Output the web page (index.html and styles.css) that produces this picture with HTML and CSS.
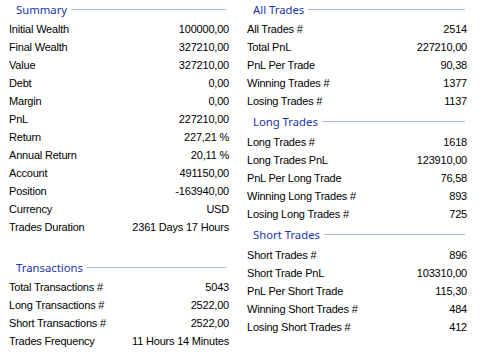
FILE: index.html
```html
<!DOCTYPE html>
<html>
<head>
<meta charset="utf-8">
<link rel="stylesheet" href="styles.css">
</head>
<body>
<div class="page">
  <div class="col col-left">
    <section class="group">
      <div class="group-head"><span class="group-title">Summary</span><span class="group-line"></span></div>
      <div class="row"><span>Initial Wealth</span><span>100000,00</span></div>
      <div class="row"><span>Final Wealth</span><span>327210,00</span></div>
      <div class="row"><span>Value</span><span>327210,00</span></div>
      <div class="row"><span>Debt</span><span>0,00</span></div>
      <div class="row"><span>Margin</span><span>0,00</span></div>
      <div class="row"><span>PnL</span><span>227210,00</span></div>
      <div class="row"><span>Return</span><span>227,21 %</span></div>
      <div class="row"><span>Annual Return</span><span>20,11 %</span></div>
      <div class="row"><span>Account</span><span>491150,00</span></div>
      <div class="row"><span>Position</span><span>-163940,00</span></div>
      <div class="row"><span>Currency</span><span>USD</span></div>
      <div class="row"><span>Trades Duration</span><span>2361 Days 17 Hours</span></div>
    </section>
    <section class="group group-gap">
      <div class="group-head"><span class="group-title">Transactions</span><span class="group-line"></span></div>
      <div class="row"><span>Total Transactions #</span><span>5043</span></div>
      <div class="row"><span>Long Transactions #</span><span>2522,00</span></div>
      <div class="row"><span>Short Transactions #</span><span>2522,00</span></div>
      <div class="row"><span>Trades Frequency</span><span>11 Hours 14 Minutes</span></div>
    </section>
  </div>
  <div class="col col-right">
    <section class="group">
      <div class="group-head"><span class="group-title">All Trades</span><span class="group-line"></span></div>
      <div class="row"><span>All Trades #</span><span>2514</span></div>
      <div class="row"><span>Total PnL</span><span>227210,00</span></div>
      <div class="row"><span>PnL Per Trade</span><span>90,38</span></div>
      <div class="row"><span>Winning Trades #</span><span>1377</span></div>
      <div class="row"><span>Losing Trades #</span><span>1137</span></div>
    </section>
    <section class="group group-small-gap">
      <div class="group-head"><span class="group-title">Long Trades</span><span class="group-line"></span></div>
      <div class="row"><span>Long Trades #</span><span>1618</span></div>
      <div class="row"><span>Long Trades PnL</span><span>123910,00</span></div>
      <div class="row"><span>PnL Per Long Trade</span><span>76,58</span></div>
      <div class="row"><span>Winning Long Trades #</span><span>893</span></div>
      <div class="row"><span>Losing Long Trades #</span><span>725</span></div>
    </section>
    <section class="group group-small-gap">
      <div class="group-head"><span class="group-title">Short Trades</span><span class="group-line"></span></div>
      <div class="row"><span>Short Trades #</span><span>896</span></div>
      <div class="row"><span>Short Trade PnL</span><span>103310,00</span></div>
      <div class="row"><span>PnL Per Short Trade</span><span>115,30</span></div>
      <div class="row"><span>Winning Short Trades #</span><span>484</span></div>
      <div class="row"><span>Losing Short Trades #</span><span>412</span></div>
    </section>
  </div>
</div>
</body>
</html>
```

FILE: styles.css
```css
html, body {
  margin: 0;
  padding: 0;
  background: #ffffff;
}
body {
  font-family: "Liberation Sans", Arial, sans-serif;
  font-size: 11px;
  letter-spacing: -0.2px;
  color: #000000;
}
.page {
  display: flex;
  width: 486px;
  height: 354px;
  overflow: hidden;
}
.col {
  display: flex;
  flex-direction: column;
  box-sizing: border-box;
}
.col-left {
  width: 243px;
  padding: 0 14px 0 9px;
}
.col-right {
  width: 243px;
  padding: 0 19px 0 4px;
}
.group-head {
  display: flex;
  align-items: center;
  height: 20px;
  padding-bottom: 1px;
  box-sizing: border-box;
  margin-left: 7px;
  margin-right: 3px;
}
.col-right .group-head {
  margin-left: 6px;
  margin-right: 2px;
}
.group-title {
  font-family: "Noto Sans", "Open Sans", sans-serif;
  font-size: 11.3px;
  letter-spacing: 0;
  color: #2233aa;
  padding-right: 4px;
}
.group-line {
  flex: 1;
  height: 1px;
  background: #a7b9e2;
}
.group-gap {
  margin-top: 22px;
}
.group-small-gap {
  margin-top: 3px;
}
.group-small-gap .group-head {
  padding-bottom: 3px;
}
.row {
  display: flex;
  justify-content: space-between;
  align-items: center;
  height: 18px;
  line-height: 18px;
  white-space: nowrap;
}
```
